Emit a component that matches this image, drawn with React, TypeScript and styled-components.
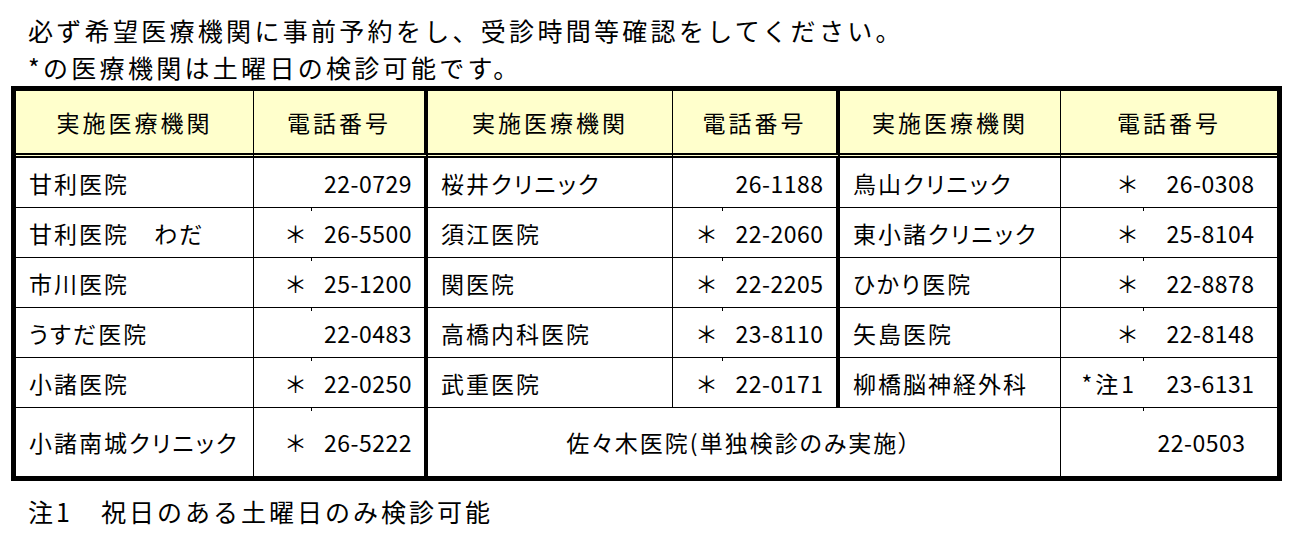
import React from 'react';
import styled, { createGlobalStyle } from 'styled-components';

const GlobalStyle = createGlobalStyle`
  body {
    margin: 0;
    background: #fff;
    color: #000;
    font-family: "Noto Sans CJK JP", "Noto Sans", sans-serif;
    font-weight: 400;
  }
`;

const Page = styled.div`
  padding-top: 12px;
  width: 1307px;
`;

const Notice = styled.div`
  padding-left: 28px;
  font-size: 25px;
  letter-spacing: 3.3px;
  line-height: 37px;
`;

const Grid = styled.div`
  margin-left: 11px;
  width: 1271px;
  box-sizing: border-box;
  border: 5px solid #000;
  display: grid;
  grid-template-columns: 238px 174px 245px 167px 221px 216px;
  grid-template-rows: 67px repeat(5, 50px) 68px;
  font-size: 23px;
  font-feature-settings: 'palt';
`;

type Edge = 'thin' | 'thick' | 'double' | 'none';

const edge = (e: Edge) =>
  e === 'thin'
    ? '1px solid #000'
    : e === 'thick'
    ? '4px solid #000'
    : e === 'double'
    ? '5px double #000'
    : 'none';

const Cell = styled.div<{ $right: Edge; $bottom: Edge; $span?: number }>`
  box-sizing: border-box;
  display: flex;
  align-items: center;
  min-width: 0;
  border-right: ${(p) => edge(p.$right)};
  border-bottom: ${(p) => edge(p.$bottom)};
  ${(p) => (p.$span ? `grid-column: span ${p.$span};` : '')}
`;

const HeadCell = styled(Cell)`
  background: #ffffcc;
  justify-content: center;
  letter-spacing: 3px;
`;

const NameCell = styled(Cell)`
  padding-left: 13px;
  letter-spacing: 2px;
  white-space: nowrap;
`;

const CenterCell = styled(Cell)`
  justify-content: center;
  letter-spacing: 2px;
  padding-right: 10px;
`;

const PhoneCell = styled(Cell)`
  align-items: stretch;
`;

const Mark = styled.span<{ $w: number; $tick?: boolean; $wide?: boolean }>`
  position: relative;
  flex: none;
  width: ${(p) => p.$w}px;
  box-sizing: border-box;
  padding-right: 7px;
  display: flex;
  align-items: center;
  justify-content: flex-end;
  white-space: nowrap;
  letter-spacing: ${(p) => (p.$wide ? '3px' : '0')};

  &::after {
    content: '';
    display: ${(p) => (p.$tick ? 'block' : 'none')};
    position: absolute;
    top: 0;
    right: 0;
    width: 1px;
    height: 3px;
    background: #000;
  }
`;

const Num = styled.span<{ $shift?: number }>`
  flex: 1;
  display: flex;
  align-items: center;
  justify-content: center;
  padding-right: ${(p) => p.$shift ?? 0}px;
  letter-spacing: 0.5px;
`;

const Footnote = styled.div`
  margin-top: 11px;
  padding-left: 28px;
  font-size: 25px;
  letter-spacing: 3px;
  line-height: 38px;
`;

interface Clinic {
  name: string;
  mark: string;
  tel: string;
}

const c = (name: string, mark: string, tel: string): Clinic => ({ name, mark, tel });

const rows: Clinic[][] = [
  [c('甘利医院', '', '22-0729'), c('桜井クリニック', '', '26-1188'), c('鳥山クリニック', '＊', '26-0308')],
  [c('甘利医院　わだ', '＊', '26-5500'), c('須江医院', '＊', '22-2060'), c('東小諸クリニック', '＊', '25-8104')],
  [c('市川医院', '＊', '25-1200'), c('関医院', '＊', '22-2205'), c('ひかり医院', '＊', '22-8878')],
  [c('うすだ医院', '', '22-0483'), c('高橋内科医院', '＊', '23-8110'), c('矢島医院', '＊', '22-8148')],
  [c('小諸医院', '＊', '22-0250'), c('武重医院', '＊', '22-0171'), c('柳橋脳神経外科', '*注1', '23-6131')],
];

const markWidths = [58, 50, 83];
const groupEdge: Edge[] = ['thick', 'thick', 'none'];

const App: React.FC = () => {
  return (
    <Page>
      <GlobalStyle />
      <Notice>
        <div>必ず希望医療機関に事前予約をし、受診時間等確認をしてください。</div>
        <div>*の医療機関は土曜日の検診可能です。</div>
      </Notice>
      <Grid>
        {groupEdge.map((g, i) => (
          <React.Fragment key={`h${i}`}>
            <HeadCell $right="thin" $bottom="double">実施医療機関</HeadCell>
            <HeadCell $right={g} $bottom="double">電話番号</HeadCell>
          </React.Fragment>
        ))}
        {rows.map((row, r) =>
          row.map((item, i) => (
            <React.Fragment key={`${r}-${i}`}>
              <NameCell $right="thin" $bottom="thin">{item.name}</NameCell>
              <PhoneCell $right={groupEdge[i]} $bottom="thin">
                <Mark $w={markWidths[i]} $tick={r > 0} $wide={item.mark.length > 1}>
                  {item.mark}
                </Mark>
                <Num>{item.tel}</Num>
              </PhoneCell>
            </React.Fragment>
          ))
        )}
        <NameCell $right="thin" $bottom="none">小諸南城クリニック</NameCell>
        <PhoneCell $right="thick" $bottom="none">
          <Mark $w={58} $tick>＊</Mark>
          <Num>26-5222</Num>
        </PhoneCell>
        <CenterCell $right="thin" $bottom="none" $span={3}>佐々木医院(単独検診のみ実施）</CenterCell>
        <PhoneCell $right="none" $bottom="none">
          <Mark $w={83} $tick />
          <Num $shift={18}>22-0503</Num>
        </PhoneCell>
      </Grid>
      <Footnote>注1　祝日のある土曜日のみ検診可能</Footnote>
    </Page>
  );
};

export default App;
